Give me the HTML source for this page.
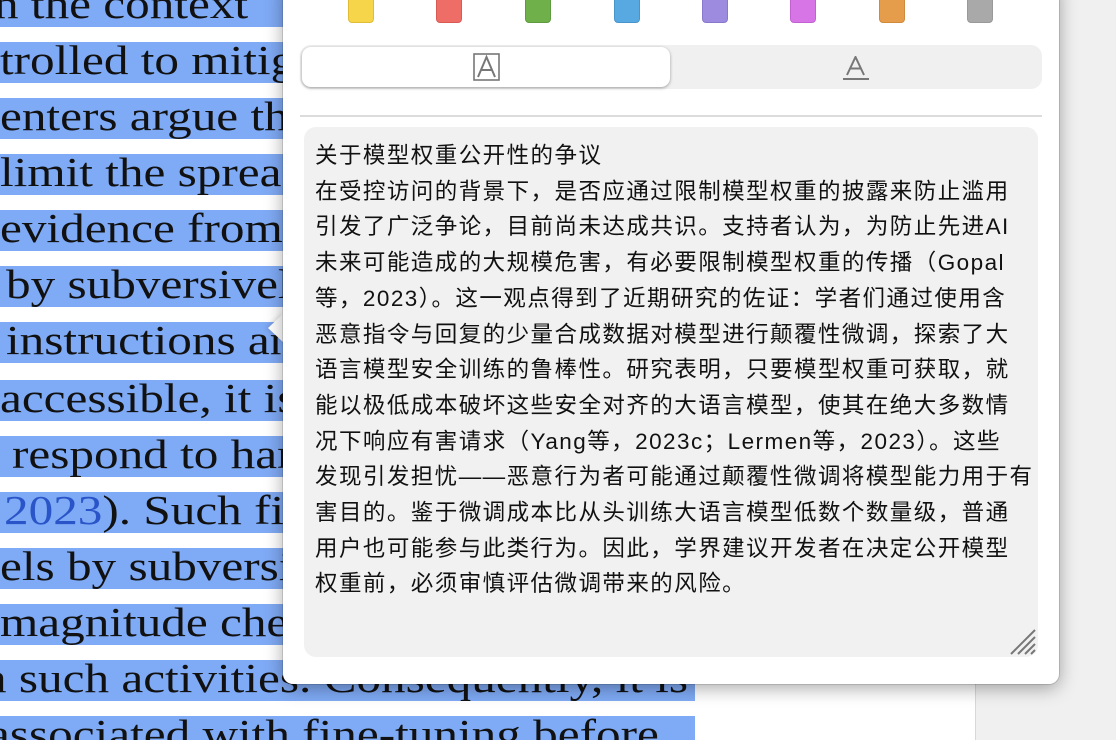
<!DOCTYPE html>
<html><head><meta charset="utf-8"><style>
html,body{margin:0;padding:0;width:1116px;height:740px;overflow:hidden;background:#fff;position:relative}
.strip{position:absolute;left:975px;top:0;width:141px;height:740px;background:#f0f0f0;border-left:1px solid #d8d8d8}
.band{position:absolute;left:0;height:41px;background:#7faaf5}
.ln{position:absolute;left:0;font-family:"Liberation Serif",serif;font-size:41px;color:#111;white-space:nowrap;line-height:41px;transform:scaleX(1.2);transform-origin:0 0}
.pop{position:absolute;left:283px;top:-20px;width:776px;height:704px;background:#fff;border-radius:10px;box-shadow:0 4px 18px rgba(0,0,0,.35),0 0 0 1px rgba(0,0,0,.12)}
.arrow{position:absolute;left:268px;top:313px;width:0;height:0;border-top:15px solid transparent;border-bottom:15px solid transparent;border-right:16px solid #fff;filter:drop-shadow(-2px 0 2px rgba(0,0,0,.12))}
.sw{position:absolute;top:-8px;width:26px;height:31px;border-radius:4px;box-sizing:border-box}
.seg{position:absolute;left:300px;top:45px;width:742px;height:44px;background:#f0f0f0;border-radius:11px}
.sel{position:absolute;left:302px;top:47px;width:368px;height:40px;background:#fff;border-radius:9px;box-shadow:0 1px 3px rgba(0,0,0,.35)}
.div{position:absolute;left:300px;top:115px;width:742px;height:2px;background:#dcdcdc}
.ta{position:absolute;left:304px;top:127px;width:734px;height:530px;background:#f1f1f1;border-radius:12px}
.txt{position:absolute;left:315px;top:138px;font-family:"Liberation Sans","Noto Sans CJK SC",sans-serif;font-size:22.5px;line-height:35.7px;color:#111;letter-spacing:1.45px;white-space:nowrap}
</style></head><body>
<div class="strip"></div>
<div class="band" style="top:-14px;width:695px"></div>
<div class="band" style="top:42px;width:695px"></div>
<div class="band" style="top:98px;width:695px"></div>
<div class="band" style="top:154px;width:695px"></div>
<div class="band" style="top:210px;width:695px"></div>
<div class="band" style="top:266px;width:695px"></div>
<div class="band" style="top:322px;width:695px"></div>
<div class="band" style="top:380px;width:695px"></div>
<div class="band" style="top:436px;width:695px"></div>
<div class="band" style="top:492px;width:695px"></div>
<div class="band" style="top:548px;width:695px"></div>
<div class="band" style="top:604px;width:695px"></div>
<div class="band" style="top:660px;width:695px"></div>
<div class="band" style="top:716px;width:695px"></div>
<div class="ln" style="top:-16px;left:-6px">n the context</div>
<div class="ln" style="top:40px">trolled to mitigate</div>
<div class="ln" style="top:96px">enters argue that</div>
<div class="ln" style="top:152px">limit the spread</div>
<div class="ln" style="top:208px">evidence from</div>
<div class="ln" style="top:264px;left:6px">by subversively</div>
<div class="ln" style="top:320px;left:6px">instructions and</div>
<div class="ln" style="top:378px">accessible, it is</div>
<div class="ln" style="top:434px;left:12px">respond to harmful</div>
<div class="ln" style="top:490px;left:4px"><span style="color:#2a55c8">2023</span>). Such findings</div>
<div class="ln" style="top:546px">els by subversively</div>
<div class="ln" style="top:602px">magnitude cheaper</div>
<div class="ln" style="top:658px;left:-18px">n such activities. Consequently, it is</div>
<div class="ln" style="top:714px;left:-12px">associated with fine-tuning before</div>
<div class="arrow"></div>
<div class="pop"></div>
<div class="sw" style="left:348px;background:#f6d54a;border:1px solid #e0bd35"></div>
<div class="sw" style="left:436px;background:#ee6d67;border:1px solid #d85a55"></div>
<div class="sw" style="left:525px;background:#6fb04b;border:1px solid #5e9a3e"></div>
<div class="sw" style="left:614px;background:#58a9e2;border:1px solid #4895cc"></div>
<div class="sw" style="left:702px;background:#9d8bdf;border:1px solid #8a78cc"></div>
<div class="sw" style="left:790px;background:#d774e6;border:1px solid #c262d2"></div>
<div class="sw" style="left:879px;background:#e59d4c;border:1px solid #d08a3c"></div>
<div class="sw" style="left:967px;background:#a9a9a9;border:1px solid #999"></div>
<div class="seg"></div>
<div class="sel"></div>
<svg style="position:absolute;left:473px;top:53px" width="28" height="28" viewBox="0 0 28 28"><rect x="1" y="1" width="25" height="26" fill="none" stroke="#777" stroke-width="1.6"/><path d="M5 24 L13.5 4 L22 24 M8 17 H19" fill="none" stroke="#777" stroke-width="2"/></svg>
<svg style="position:absolute;left:842px;top:56px" width="28" height="26" viewBox="0 0 28 26"><path d="M5 19 L13.5 1 L22 19 M8.5 12.5 H18.5" fill="none" stroke="#777" stroke-width="2"/><rect x="1" y="22" width="26" height="2" fill="#777"/></svg>
<div class="div"></div>
<div class="ta"></div>
<div class="txt">关于模型权重公开性的争议<br>在受控访问的背景下，是否应通过限制模型权重的披露来防止滥用<br>引发了广泛争论，目前尚未达成共识。支持者认为，为防止先进AI<br>未来可能造成的大规模危害，有必要限制模型权重的传播（Gopal<br>等，2023）。这一观点得到了近期研究的佐证：学者们通过使用含<br>恶意指令与回复的少量合成数据对模型进行颠覆性微调，探索了大<br>语言模型安全训练的鲁棒性。研究表明，只要模型权重可获取，就<br>能以极低成本破坏这些安全对齐的大语言模型，使其在绝大多数情<br>况下响应有害请求（Yang等，2023c；Lermen等，2023）。这些<br>发现引发担忧——恶意行为者可能通过颠覆性微调将模型能力用于有<br>害目的。鉴于微调成本比从头训练大语言模型低数个数量级，普通<br>用户也可能参与此类行为。因此，学界建议开发者在决定公开模型<br>权重前，必须审慎评估微调带来的风险。</div>
<svg style="position:absolute;left:1010px;top:629px" width="26" height="26" viewBox="0 0 26 26"><path d="M1 25 L25 1 M8 25 L25 8 M15 25 L25 15 M21 25 L25 21" stroke="#777" stroke-width="2"/></svg>
</body></html>
